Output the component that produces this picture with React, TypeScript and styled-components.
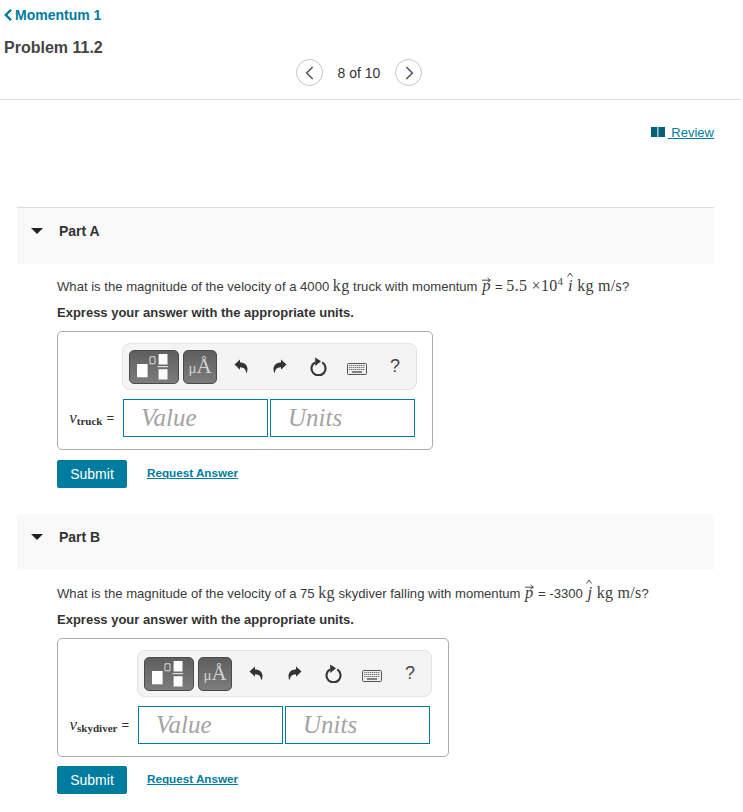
import React from "react";
import styled, { createGlobalStyle } from "styled-components";

const GlobalStyle = createGlobalStyle`
  html, body {
    margin: 0;
    padding: 0;
    background: #fff;
    font-family: "Liberation Sans", Arial, sans-serif;
    color: #333;
  }
`;

const Page = styled.div`
  width: 743px;
  height: 812px;
  overflow: hidden;
`;

const Header = styled.header`
  width: 741px;
  height: 100px;
  box-sizing: border-box;
  border-bottom: 1px solid #ddd;
  padding: 7px 0 0 4px;
`;

const BackLink = styled.a`
  display: flex;
  align-items: center;
  height: 16px;
  gap: 3px;
  font-size: 14px;
  font-weight: bold;
  color: #007c9e;
`;

const Title = styled.h1`
  margin: 16px 0 0;
  font-size: 16px;
  line-height: 18px;
  font-weight: bold;
  color: #444;
`;

const Pager = styled.nav`
  display: flex;
  align-items: center;
  margin: 2px 0 0 292px;
`;

const PagerButton = styled.button`
  display: flex;
  align-items: center;
  justify-content: center;
  width: 27px;
  height: 27px;
  padding: 0;
  border: 1px solid #c4c4c4;
  border-radius: 50%;
  background: #fff;
`;

const PagerText = styled.span`
  width: 72px;
  text-align: center;
  font-size: 14px;
  color: #333;
`;

const ReviewRow = styled.div`
  display: flex;
  justify-content: flex-end;
  align-items: center;
  gap: 3px;
  width: 714px;
  height: 16px;
  margin-top: 24px;
`;

const ReviewLink = styled.a`
  font-size: 13px;
  color: #007c9e;
  text-decoration: underline;
  white-space: pre;
`;

const Part = styled.section<{ $first?: boolean }>`
  margin-top: ${({ $first }) => ($first ? "67px" : "26px")};
`;

const PartHeader = styled.div<{ $ruled?: boolean }>`
  display: flex;
  align-items: flex-start;
  width: 697px;
  height: ${({ $ruled }) => ($ruled ? "57px" : "56px")};
  box-sizing: border-box;
  margin-left: 17px;
  padding: 15px 0 0 14px;
  background: #f9f9f9;
  border-top: ${({ $ruled }) => ($ruled ? "1px solid #ddd" : "none")};
`;

const Caret = styled.span`
  width: 0;
  height: 0;
  margin: 5px 16px 0 0;
  border-left: 6px solid transparent;
  border-right: 6px solid transparent;
  border-top: 6px solid #222;
`;

const PartName = styled.span`
  font-size: 14px;
  line-height: 16px;
  font-weight: bold;
  color: #333;
`;

const PartBody = styled.div<{ $top: number }>`
  padding: ${({ $top }) => $top}px 0 0 57px;
`;

const Question = styled.p`
  margin: 0;
  height: 18px;
  line-height: 18px;
  font-size: 13.1px;
  white-space: nowrap;
  color: #3a3a3a;
`;

const Instruction = styled.p`
  margin: 9px 0 0;
  height: 18px;
  line-height: 18px;
  font-size: 13px;
  font-weight: bold;
  color: #333;
`;

const Math = styled.span`
  font-family: "Liberation Serif", "Times New Roman", serif;
  font-size: 16px;
  letter-spacing: 0.3px;
`;

const MathVar = styled.span`
  position: relative;
  display: inline-block;
  font-family: "Liberation Serif", "Times New Roman", serif;
  font-style: italic;
  font-size: 16.5px;
  padding: 0 1px;
`;

const Accent = styled.svg<{ $top: number; $left: number }>`
  position: absolute;
  left: ${({ $left }) => $left}px;
  top: ${({ $top }) => $top}px;
`;

const Sup = styled.sup`
  font-size: 11px;
  line-height: 0;
`;

const AnswerBox = styled.div<{ $width: number; $label: number }>`
  width: ${({ $width }) => $width}px;
  height: 119px;
  box-sizing: border-box;
  margin-top: 9px;
  border: 1px solid #aaa;
  border-radius: 5px;
  background: #fff;
  padding: 11px 0 0 0;
  display: grid;
  grid-template-columns: ${({ $label }) => $label}px 1fr;
  grid-template-rows: 47px 38px;
  row-gap: 9px;
`;

const Toolbar = styled.div`
  grid-column: 2;
  display: flex;
  align-items: center;
  width: 295px;
  height: 47px;
  box-sizing: border-box;
  margin-left: -1px;
  padding: 0 0 0 6px;
  background: #f4f4f4;
  border: 1px solid #e2e2e2;
  border-radius: 8px;
`;

const PaletteButton = styled.button<{ $width: number }>`
  display: flex;
  align-items: center;
  justify-content: center;
  width: ${({ $width }) => $width}px;
  height: 34px;
  margin-right: 4px;
  padding: 0;
  box-sizing: border-box;
  background: linear-gradient(#5f5f5f, #7c7c7c);
  border: 1px solid #4a4a4a;
  border-radius: 5px;
  color: #d4d4d4;
  font-family: "Liberation Serif", serif;
  font-size: 21px;
  line-height: 26px;
`;

const Micro = styled.span`
  font-size: 15px;
`;

const FractionSvg = styled.svg`
  margin: 0 4px 0 0;
`;

const ToolIcon = styled.span<{ $left: number; $drop?: number }>`
  display: flex;
  justify-content: center;
  align-items: center;
  width: 24px;
  margin-left: ${({ $left }) => $left}px;
  padding-top: ${({ $drop }) => $drop ?? 0}px;
  color: #444;
  font-size: 18px;
`;

const Label = styled.div`
  display: flex;
  align-items: center;
  justify-content: flex-end;
  padding: 0 9px 1px 0;
  font-family: "Liberation Serif", serif;
  white-space: nowrap;
  color: #333;
`;

const LabelVar = styled.i`
  font-size: 17px;
`;

const LabelSub = styled.b`
  font-size: 11px;
  position: relative;
  top: 3px;
  margin-right: 4px;
`;

const Equals = styled.span`
  font-family: "Liberation Sans", sans-serif;
  font-size: 13px;
`;

const Fields = styled.div`
  display: flex;
  gap: 2px;
`;

const Field = styled.div`
  width: 145px;
  height: 38px;
  box-sizing: border-box;
  padding-left: 17px;
  border: 1px solid #007c9e;
  font-family: "Liberation Serif", serif;
  font-style: italic;
  font-size: 25px;
  line-height: 36px;
  color: #a3a3a3;
`;

const Actions = styled.div<{ $top: number }>`
  display: flex;
  align-items: center;
  gap: 20px;
  margin-top: ${({ $top }) => $top}px;
`;

const Submit = styled.button`
  width: 70px;
  height: 28px;
  padding: 0;
  border: none;
  border-radius: 2px;
  background: #007c9e;
  color: #fff;
  font-family: inherit;
  font-size: 14px;
`;

const RequestLink = styled.a`
  margin-bottom: 3px;
  font-size: 11.7px;
  font-weight: bold;
  color: #007c9e;
  text-decoration: underline;
`;

const Chevron = ({ dir }: { dir: "l" | "r" }) => (
  <svg width="16" height="16" viewBox="0 0 12 12">
    <path d={dir === "l" ? "M8 1.5 3.5 6 8 10.5" : "M4 1.5 8.5 6 4 10.5"} fill="none" stroke="#556" strokeWidth="1.2" />
  </svg>
);

const BackChevron = () => (
  <svg width="8" height="12" viewBox="0 0 8 12">
    <path d="M7 0.8 1.8 6 7 11.2" fill="none" stroke="#007c9e" strokeWidth="2.4" />
  </svg>
);

const BookIcon = () => (
  <svg width="14" height="10" viewBox="0 0 14 10">
    <path d="M0 0h6.4v10H0zM7.4 0H14v10H7.4z" fill="#005f7a" />
  </svg>
);

const FractionIcon = () => (
  <FractionSvg width="31" height="26" viewBox="0 0 31 26">
    <path d="M0 10h10.6v13.3H0z" fill="#fff" />
    <path d="M13 2.8h5v7h-5z" fill="none" stroke="#ddd" />
    <path d="M21.6 0h8.9v10.6h-8.9zM21.6 15.3h8.9v10.1h-8.9z" fill="#fff" />
    <path d="M20.5 12h11v1.2h-11z" fill="#ddd" />
  </FractionSvg>
);

const ArrowAccent = () => (
  <Accent $top={0} $left={1} width="9" height="6" viewBox="0 0 9 6">
    <path d="M0 3.2h8M5.6 1 8.4 3.2 5.6 5.2" fill="none" stroke="#333" strokeWidth="0.9" />
  </Accent>
);

const HatAccent = () => (
  <Accent $top={-5} $left={0} width="6" height="5" viewBox="0 0 6 5">
    <path d="M0.6 4.5 3 1 5.4 4.5" fill="none" stroke="#333" strokeWidth="0.9" />
  </Accent>
);

const UndoIcon = ({ flip }: { flip?: boolean }) => (
  <svg width="14" height="15" viewBox="0 0 14 15" style={flip ? { transform: "scaleX(-1)" } : undefined}>
    <path d="M0.5 5.5 6 0.5V3.4C10.5 3.4 13.5 6 13.5 10.2 13.5 11.6 13 13.2 12.2 14.5 12.2 11 10.5 8.2 6 8.2V10.8Z" fill="#333" />
  </svg>
);

const ResetIcon = () => (
  <svg width="17" height="19" viewBox="0 0 17 19">
    <path d="M5 5.3A7 7 0 1 0 12.2 5.4" fill="none" stroke="#333" strokeWidth="2.1" />
    <path d="M5.2 0.5 11 4.2 5.2 9Z" fill="#333" />
  </svg>
);

const KeyboardIcon = () => (
  <svg width="20" height="12" viewBox="0 0 20 12">
    <rect x="0.5" y="0.5" width="19" height="11" rx="1" fill="#eee" stroke="#555" />
    <path d="M2 2.5h16M2 4.5h16M2 6.5h16" stroke="#777" strokeDasharray="1.4 .6" />
    <path d="M5 9h10" stroke="#555" strokeWidth="1.4" />
  </svg>
);

const AnswerForm = ({ width, label, name, actionsTop }: { width: number; label: number; name: string; actionsTop: number }) => (
  <>
    <Instruction>Express your answer with the appropriate units.</Instruction>
    <AnswerBox $width={width} $label={label}>
      <Toolbar>
        <PaletteButton $width={50}>
          <FractionIcon />
        </PaletteButton>
        <PaletteButton $width={34}>
          <span>
            <Micro>μ</Micro>Å
          </span>
        </PaletteButton>
        <ToolIcon $left={8}><UndoIcon /></ToolIcon>
        <ToolIcon $left={15}><UndoIcon flip /></ToolIcon>
        <ToolIcon $left={14}><ResetIcon /></ToolIcon>
        <ToolIcon $left={15} $drop={5}><KeyboardIcon /></ToolIcon>
        <ToolIcon $left={14}>?</ToolIcon>
      </Toolbar>
      <Label>
        <LabelVar>v</LabelVar>
        <LabelSub>{name}</LabelSub>
        <Equals>=</Equals>
      </Label>
      <Fields>
        <Field>Value</Field>
        <Field>Units</Field>
      </Fields>
    </AnswerBox>
    <Actions $top={actionsTop}>
      <Submit>Submit</Submit>
      <RequestLink>Request Answer</RequestLink>
    </Actions>
  </>
);

const App = () => {
  return (
    <Page>
      <GlobalStyle />
      <Header>
        <BackLink>
          <BackChevron />
          Momentum 1
        </BackLink>
        <Title>Problem 11.2</Title>
        <Pager>
          <PagerButton><Chevron dir="l" /></PagerButton>
          <PagerText>8 of 10</PagerText>
          <PagerButton><Chevron dir="r" /></PagerButton>
        </Pager>
      </Header>

      <ReviewRow>
        <BookIcon />
        <ReviewLink> Review</ReviewLink>
      </ReviewRow>

      <Part $first>
        <PartHeader $ruled>
          <Caret />
          <PartName>Part A</PartName>
        </PartHeader>
        <PartBody $top={13}>
          <Question>
            What is the magnitude of the velocity of a 4000 <Math>kg</Math> truck with momentum{" "}
            <MathVar>p<ArrowAccent /></MathVar> = <Math>5.5 ×10<Sup>4</Sup></Math>{" "}
            <MathVar>i<HatAccent /></MathVar> <Math>kg m/s</Math>?
          </Question>
          <AnswerForm width={376} label={65} name="truck" actionsTop={10} />
        </PartBody>
      </Part>

      <Part>
        <PartHeader>
          <Caret />
          <PartName>Part B</PartName>
        </PartHeader>
        <PartBody $top={14}>
          <Question>
            What is the magnitude of the velocity of a 75 <Math>kg</Math> skydiver falling with momentum{" "}
            <MathVar>p<ArrowAccent /></MathVar> = -3300{" "}
            <MathVar>j<HatAccent /></MathVar> <Math>kg m/s</Math>?
          </Question>
          <AnswerForm width={392} label={80} name="skydiver" actionsTop={9} />
        </PartBody>
      </Part>
    </Page>
  );
};

export default App;
